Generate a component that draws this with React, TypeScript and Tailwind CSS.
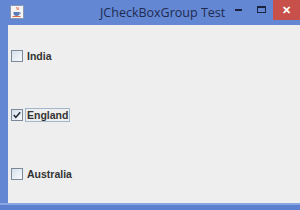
import React from "react";

const items = [
  { label: "India", checked: false, focused: false },
  { label: "England", checked: true, focused: true },
  { label: "Australia", checked: false, focused: false },
];

function JavaIcon() {
  return (
    <svg width="14" height="14" viewBox="0 0 14 14">
      <rect x="0.5" y="0.5" width="13" height="13" rx="1" fill="#f4f4f4" stroke="#8a96b0" />
      <path d="M7 2c-1 1 1 2 0 3M8.5 2.5c-0.7 0.8 0.7 1.4 0 2.2" stroke="#e05a2a" strokeWidth="0.9" fill="none" />
      <path d="M3.5 7h6v1.5c0 1.5-1.3 2.5-3 2.5s-3-1-3-2.5z" fill="#5a7ab8" />
      <path d="M9.5 7.5c1.2 0 1.2 1.8 0 1.8" stroke="#5a7ab8" strokeWidth="0.8" fill="none" />
      <path d="M2.5 11.5h8" stroke="#e05a2a" strokeWidth="0.9" />
    </svg>
  );
}

function CheckBox({ label, checked, focused }: { label: string; checked: boolean; focused: boolean }) {
  return (
    <div className="flex items-center pl-[3px]">
      <div className="w-[12px] h-[12px] border border-[#7a8a99] bg-gradient-to-br from-[#d6dfeb] to-[#f8fafc] flex items-center justify-center">
        {checked && (
          <svg width="8" height="8" viewBox="0 0 8 8">
            <path d="M0.8 4l2 2.4L7.2 1.2" stroke="#1c2430" strokeWidth="1.5" fill="none" />
          </svg>
        )}
      </div>
      <span
        className={`ml-[2px] pl-[1px] pr-[1px] text-[10.5px] font-bold text-[#333333] leading-[12px] border ${
          focused ? "border-[#a3b8cc]" : "border-transparent"
        }`}
        style={{ fontFamily: "'Liberation Sans', Arial, sans-serif" }}
      >
        {label}
      </span>
    </div>
  );
}

export default function App() {
  return (
    <div className="w-[300px] h-[210px] bg-[#6487d4] flex flex-col overflow-hidden">
      {/* Title bar */}
      <div className="h-[25px] flex items-start shrink-0">
        <div className="pl-[10px] pt-[5px]">
          <JavaIcon />
        </div>
        <div
          className="flex-1 pl-[76px] pt-[5px] text-[12.5px] leading-[16px] text-[#1e2b50]"
          style={{ fontFamily: "'Open Sans', 'Liberation Sans', sans-serif" }}
        >
          JCheckBoxGroup Test
        </div>
        <div className="flex items-start">
          <div className="w-[22px] h-[20px] flex items-center justify-center">
            <div className="w-[7px] h-[2px] bg-[#1a2340]" />
          </div>
          <div className="w-[24px] h-[20px] flex items-start justify-center pt-[6px]">
            <div className="w-[9px] h-[7px] border border-[#1a2340] border-t-2" />
          </div>
          <div
            className="w-[27px] h-[20px] bg-[#c7504b] flex items-center justify-center text-white text-[11px] font-bold"
            style={{ fontFamily: "'Liberation Sans', sans-serif" }}
          >
            ✕
          </div>
        </div>
      </div>
      {/* Body */}
      <div className="flex flex-1">
        <div className="w-[8px] shrink-0" />
        <div className="flex-1 bg-[#eeeeee] grid grid-rows-3 items-center pt-[1px]">
          {items.map((it) => (
            <CheckBox key={it.label} {...it} />
          ))}
        </div>
      </div>
      <div className="h-[7px] shrink-0 border-t-2 border-[#8aa6e2] bg-[#5b80d0]" />
    </div>
  );
}
